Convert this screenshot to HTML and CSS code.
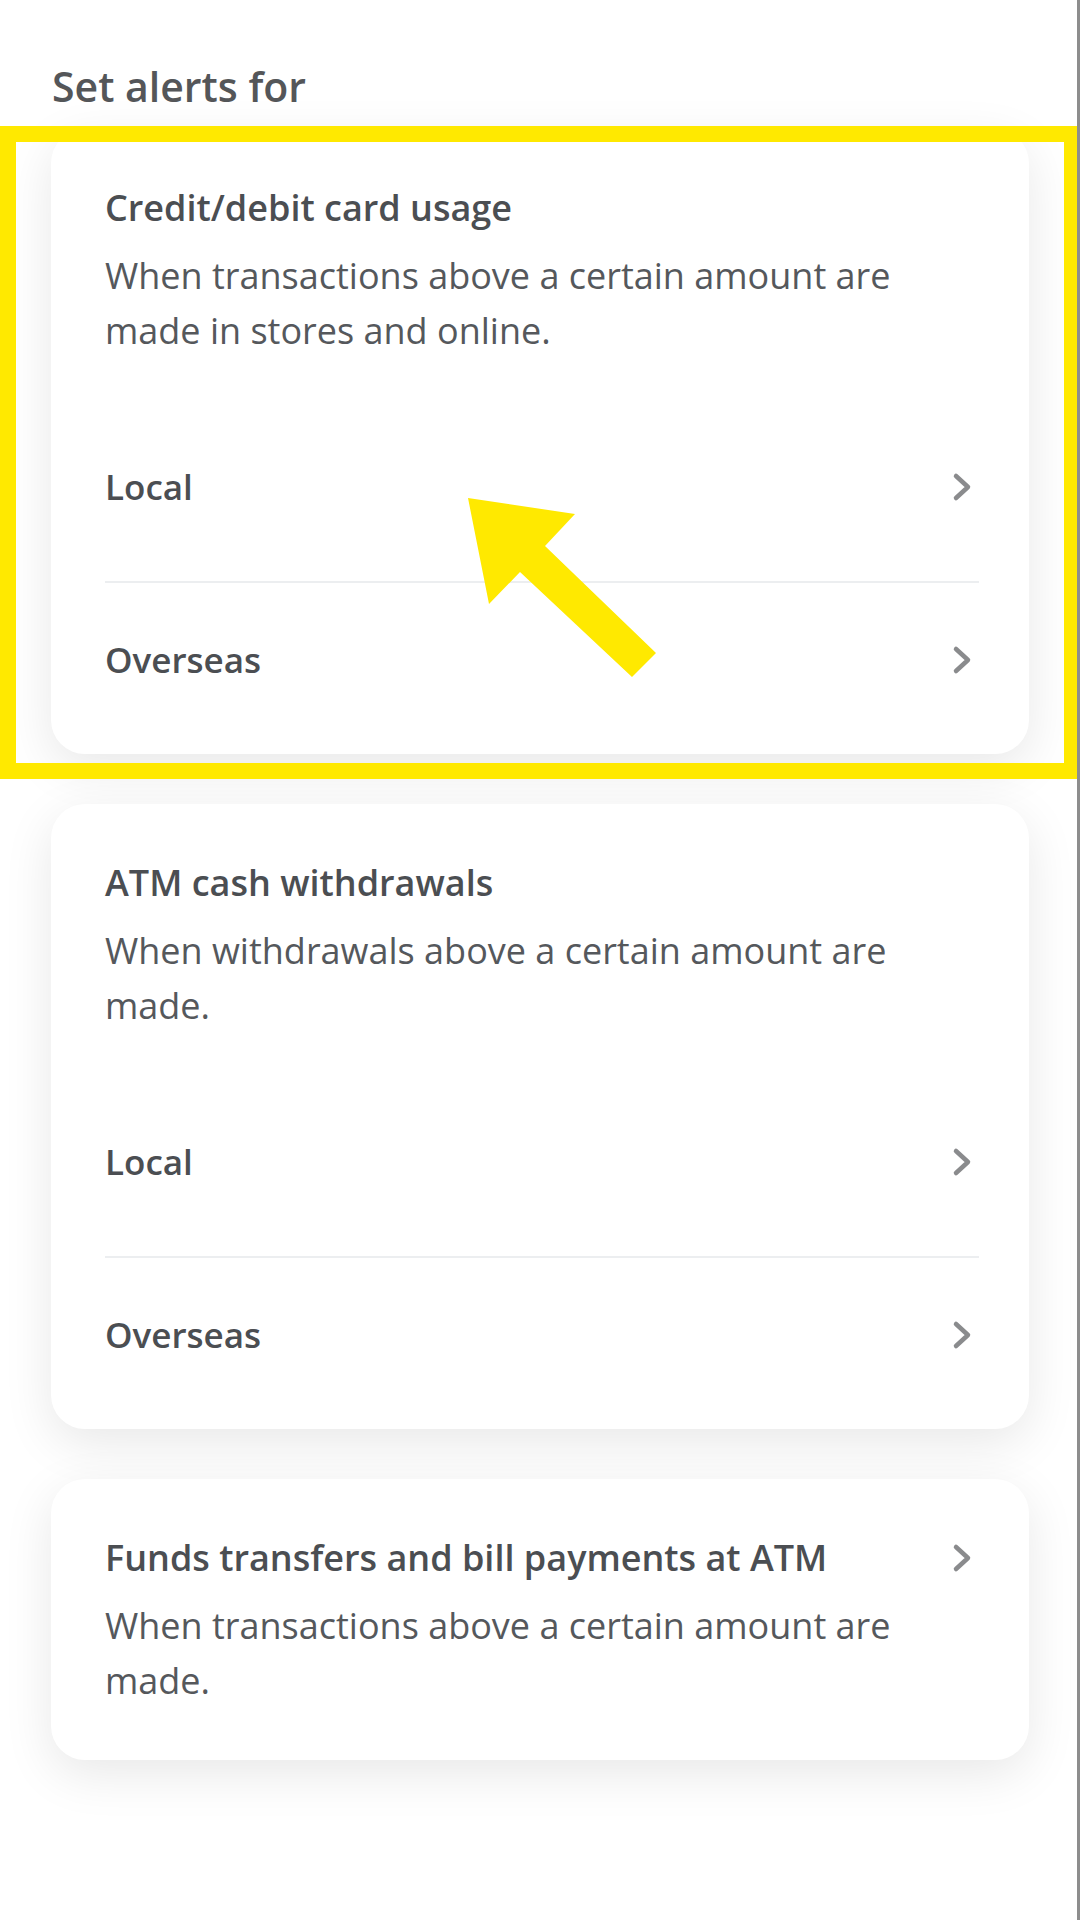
FILE: index.html
```html
<!DOCTYPE html>
<html lang="en">
<head>
<meta charset="utf-8">
<title>Set alerts for</title>
<link rel="stylesheet" href="styles.css">
</head>
<body>
<div class="screen">
  <h1 class="heading">Set alerts for</h1>

  <section class="card">
    <div class="card-head">
      <div class="title-row"><h2 class="title">Credit/debit card usage</h2></div>
      <p class="desc">When transactions above a certain amount are made in stores and online.</p>
    </div>
    <div class="row">
      <span class="row-label">Local</span>
      <svg class="chev" viewBox="0 0 20 30" width="20" height="30"><path d="M4 4 L16 15 L4 26"/></svg>
    </div>
    <div class="divider"></div>
    <div class="row">
      <span class="row-label">Overseas</span>
      <svg class="chev" viewBox="0 0 20 30" width="20" height="30"><path d="M4 4 L16 15 L4 26"/></svg>
    </div>
  </section>

  <section class="card">
    <div class="card-head">
      <div class="title-row"><h2 class="title">ATM cash withdrawals</h2></div>
      <p class="desc">When withdrawals above a certain amount are made.</p>
    </div>
    <div class="row">
      <span class="row-label">Local</span>
      <svg class="chev" viewBox="0 0 20 30" width="20" height="30"><path d="M4 4 L16 15 L4 26"/></svg>
    </div>
    <div class="divider"></div>
    <div class="row">
      <span class="row-label">Overseas</span>
      <svg class="chev" viewBox="0 0 20 30" width="20" height="30"><path d="M4 4 L16 15 L4 26"/></svg>
    </div>
  </section>

  <section class="card card-single">
    <div class="card-head">
      <div class="title-row">
        <h2 class="title">Funds transfers and bill payments at ATM</h2>
        <svg class="chev" viewBox="0 0 20 30" width="20" height="30"><path d="M4 4 L16 15 L4 26"/></svg>
      </div>
      <p class="desc">When transactions above a certain amount are made.</p>
    </div>
  </section>

  <div class="highlight"></div>
  <svg class="arrow" viewBox="0 0 210 200" width="210" height="200">
    <polygon points="8,8 115,24 85,56 196,163 172,187 60,82 29,114"/>
  </svg>
</div>
</body>
</html>
```
FILE: styles.css
```css
* { box-sizing: border-box; }

html, body {
  margin: 0;
  padding: 0;
  background: #ffffff;
}

body {
  font-family: "Open Sans", "Noto Sans", sans-serif;
  color: #4b4e52;
}

.screen {
  position: relative;
  width: 1080px;
  height: 1920px;
  padding: 61px 51px 0 51px;
  background: #ffffff;
  border-right: 3px solid #8d8d8d;
  overflow: hidden;
  display: flex;
  flex-direction: column;
  gap: 50px;
}

.heading {
  margin: 0 0 -32px 1px;
  font-size: 41px;
  line-height: 50px;
  font-weight: 600;
  color: #545659;
}

.card {
  width: 978px;
  background: #ffffff;
  border-radius: 34px;
  box-shadow: 0 14px 50px rgba(0, 0, 0, 0.095);
  padding: 51px 50px 0 54px;
}

.card-head {
  padding-bottom: 54px;
}

.card-single .card-head {
  padding-bottom: 52px;
}

.title-row {
  display: flex;
  align-items: center;
  justify-content: space-between;
}

.title {
  margin: 0;
  font-size: 36px;
  line-height: 55px;
  font-weight: 600;
  color: #4b4e52;
}

.desc {
  margin: 13px 0 0 0;
  max-width: 850px;
  font-size: 36px;
  line-height: 55px;
  font-weight: 400;
  color: #55585c;
}

.row {
  display: flex;
  align-items: center;
  justify-content: space-between;
  padding: 52px 0 71px 0;
}

.row-label {
  font-size: 35px;
  line-height: 46px;
  font-weight: 600;
  color: #4b4e52;
}

.chev {
  flex: none;
  margin-right: 7px;
  fill: none;
  stroke: #8a8b8d;
  stroke-width: 4.5;
  stroke-linecap: round;
  stroke-linejoin: round;
}

.divider {
  height: 2px;
  margin-bottom: 2px;
  background: #eceef0;
}

.highlight {
  position: absolute;
  left: 0;
  top: 126px;
  width: 1080px;
  height: 653px;
  border: 16px solid #ffe900;
  pointer-events: none;
}

.arrow {
  position: absolute;
  left: 460px;
  top: 490px;
  fill: #ffe900;
}
```
